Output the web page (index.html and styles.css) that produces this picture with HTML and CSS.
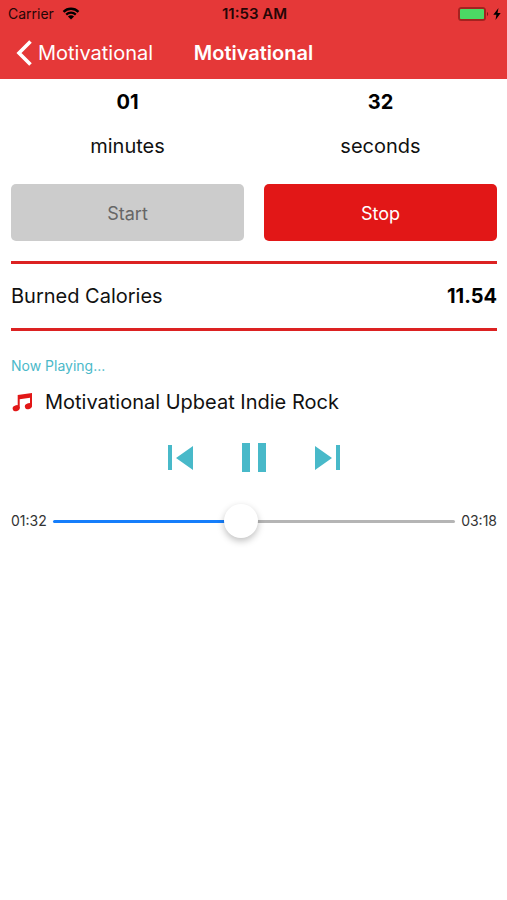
FILE: index.html
```html
<!DOCTYPE html>
<html lang="en">
<head>
<meta charset="utf-8">
<meta name="viewport" content="width=device-width, initial-scale=1">
<title>Motivational</title>
<link rel="stylesheet" href="styles.css">
</head>
<body>
<header class="header">
  <div class="status">
    <div class="status-left">
      <span>Carrier</span>
      <svg class="wifi" viewBox="0 0 18 13" aria-hidden="true">
        <path d="M1.5 4.8a10.8 10.8 0 0 1 15 0M4.2 7.6a7 7 0 0 1 9.6 0" fill="none" stroke="currentColor" stroke-width="2.300"/>
        <path d="M9 12.6 5.900 9.600a4.500 4.500 0 0 1 6.200 0z" fill="currentColor"/>
      </svg>
    </div>
    <span class="clock">11:53 AM</span>
    <div class="status-right">
      <svg class="battery" viewBox="0 0 32 14" aria-hidden="true">
        <rect x="1" y="1" width="26" height="12" rx="2.5" fill="none" stroke="#a32320" stroke-width="2"/>
        <rect x="2" y="2" width="24" height="10" rx="1" fill="#4cd964"/>
        <path d="M29 5v4a2.3 2.3 0 0 0 0-4z" fill="#7d1a18"/>
      </svg>
      <svg class="bolt" viewBox="0 0 8 12" aria-hidden="true">
        <path d="M5.500 0 .3 6.800h3.100L2.500 12l5.200-6.900H4.500z" fill="currentColor"/>
      </svg>
    </div>
  </div>
  <nav class="nav">
    <a class="back" href="#">
      <svg class="chevron" viewBox="0 0 17 26" aria-hidden="true">
        <path d="M14.500 1.500 3 13l11.500 11.500" fill="none" stroke="currentColor" stroke-width="3.600"/>
      </svg>
      <span>Motivational</span>
    </a>
    <h1 class="title">Motivational</h1>
  </nav>
</header>
<main class="content">
  <section class="timer">
    <div class="unit"><strong>01</strong><span>minutes</span></div>
    <div class="unit"><strong>32</strong><span>seconds</span></div>
    <button class="btn btn-start" type="button" disabled>Start</button>
    <button class="btn btn-stop" type="button">Stop</button>
  </section>
  <section class="calories">
    <span>Burned Calories</span>
    <strong>11.54</strong>
  </section>
  <section class="player">
    <h2 class="now">Now Playing...</h2>
    <div class="track">
      <svg class="note" viewBox="0 0 22 22" aria-hidden="true">
        <path d="M6.700 4 21 2v13.500h-2V6.800L8.700 8.300v9H6.700z" fill="currentColor"/>
        <ellipse cx="5.200" cy="17.200" rx="3.600" ry="2.900" transform="rotate(-20 5.200 17.200)" fill="currentColor"/>
        <ellipse cx="17.400" cy="15.200" rx="3.600" ry="2.900" transform="rotate(-20 17.400 15.200)" fill="currentColor"/>
      </svg>
      <span>Motivational Upbeat Indie Rock</span>
    </div>
    <div class="controls">
      <button class="control" type="button" aria-label="Previous">
        <svg viewBox="0 0 30 30"><path d="M2 2h4v25H2zM27 3v24L10 15z" fill="currentColor"/></svg>
      </button>
      <button class="control" type="button" aria-label="Pause">
        <svg viewBox="0 0 30 30"><path d="M3 0h8v29H3zM19 0h8v29h-8z" fill="currentColor"/></svg>
      </button>
      <button class="control" type="button" aria-label="Next">
        <svg viewBox="0 0 30 30"><path d="M24 2h4v25h-4zM3 3v24l17-12z" fill="currentColor"/></svg>
      </button>
    </div>
    <div class="seek">
      <label for="seek">01:32</label>
      <input id="seek" class="slider" type="range" min="0" max="198" value="92" style="--progress: 46.46%">
      <span>03:18</span>
    </div>
  </section>
</main>
</body>
</html>
```

FILE: styles.css
```css
* {
  box-sizing: border-box;
}

body {
  margin: 0;
  background: #fff;
  color: #111;
  font-family: Inter, "Liberation Sans", sans-serif;
  font-size: 20px;
  line-height: 24px;
}

button {
  padding: 0;
  border: 0;
  font: inherit;
}

.header {
  background: #e53838;
  color: #fff;
}

.status {
  display: grid;
  grid-template-columns: 1fr auto 1fr;
  align-items: center;
  height: 27px;
  padding: 0 6px 0 8px;
  color: #250606;
  font-size: 14px;
}

.status-left,
.status-right {
  display: flex;
  align-items: center;
  gap: 8px;
}

.status-right {
  justify-content: flex-end;
  gap: 3px;
}

.clock {
  font-size: 15px;
  font-weight: 600;
}

.wifi {
  width: 18px;
  height: 13px;
  color: #000;
}

.battery {
  width: 32px;
  height: 14px;
}

.bolt {
  width: 8px;
  height: 12px;
  color: #000;
}

.nav {
  display: grid;
  grid-template-columns: 1fr auto 1fr;
  align-items: center;
  height: 52px;
  padding: 0 16px;
}

.back {
  display: flex;
  align-items: center;
  gap: 5px;
  color: inherit;
  text-decoration: none;
}

.chevron {
  width: 17px;
  height: 26px;
}

.title {
  margin: 0;
  font-size: 20px;
  font-weight: 600;
}

.content {
  padding: 11px 10px 0 11px;
}

.timer {
  display: grid;
  grid-template-columns: 1fr 1fr;
  column-gap: 20px;
  row-gap: 26px;
}

.unit {
  display: flex;
  flex-direction: column;
  align-items: center;
  gap: 20px;
}

strong {
  color: #000;
  font-weight: 700;
}

.btn {
  height: 57px;
  padding-top: 2px;
  border-radius: 5px;
  font-size: 18px;
}

.btn-start {
  background: #ccc;
  color: #666;
}

.btn-stop {
  background: #e21717;
  color: #fff;
}

.calories {
  display: flex;
  align-items: center;
  justify-content: space-between;
  height: 70px;
  margin-top: 20px;
  border-top: 3px solid #dc2222;
  border-bottom: 3px solid #dc2222;
}

.now {
  margin: 25px 0 14px;
  color: #4bb9c9;
  font-size: 14px;
  font-weight: 400;
  line-height: 20px;
}

.track {
  display: flex;
  align-items: center;
  gap: 12px;
}

.note {
  width: 22px;
  height: 22px;
  color: #e21717;
}

.controls {
  display: flex;
  justify-content: center;
  gap: 43px;
  margin-top: 29px;
}

.control {
  width: 30px;
  height: 30px;
  background: none;
  color: #48b9c9;
}

.control svg {
  display: block;
}

.seek {
  display: flex;
  align-items: center;
  gap: 6px;
  margin-top: 20px;
  color: #333;
  font-size: 14px;
}

.slider {
  flex: 1;
  min-width: 0;
  height: 56px;
  margin: 0;
  background: none;
  appearance: none;
}

.slider::-webkit-slider-runnable-track {
  height: 3px;
  border-radius: 2px;
  background: linear-gradient(to right, #157efb var(--progress), #b5b5b5 var(--progress));
}

.slider::-webkit-slider-thumb {
  width: 34px;
  height: 34px;
  margin-top: -16px;
  border-radius: 50%;
  background: #fff;
  box-shadow: 0 3px 7px rgba(0, 0, 0, 0.25);
  appearance: none;
}
```
